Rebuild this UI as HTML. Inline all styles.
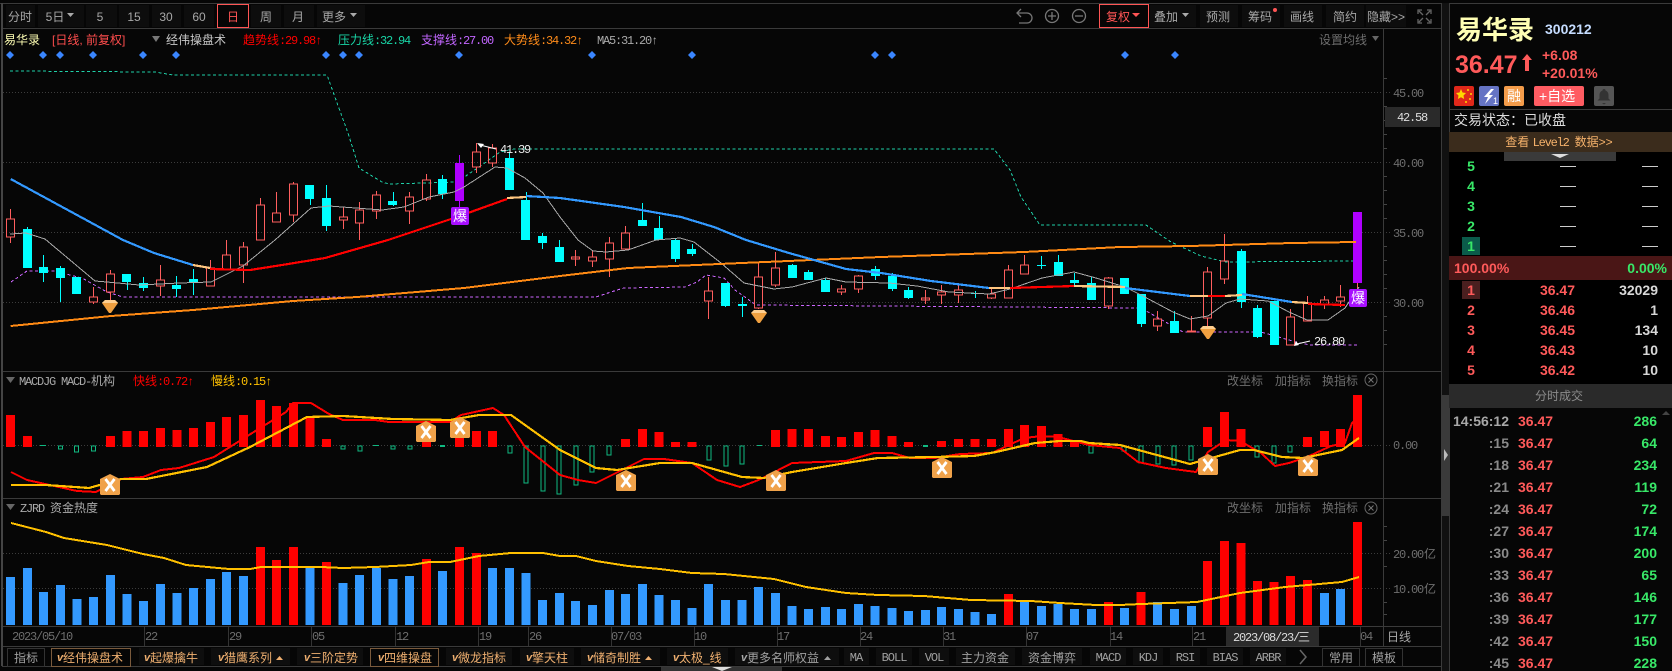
<!DOCTYPE html>
<html lang="zh"><head><meta charset="utf-8"><title>易华录</title>
<style>
html,body{margin:0;padding:0;background:#060606;width:1672px;height:671px;overflow:hidden}
svg{display:block}
text{font-family:"Liberation Sans","Noto Sans CJK SC",sans-serif;font-size:12px;white-space:pre}
.m{font-family:"Liberation Mono","Noto Sans CJK SC",monospace;letter-spacing:-1.2px}
.t{font-size:12px;fill:#a8a8a8;text-anchor:middle}
.g{fill:#6e6e6e;font-size:12px}
.ax{fill:#6e6e6e;font-family:"Liberation Mono",monospace;letter-spacing:-1.2px}
.r{font-size:14px;font-weight:bold;fill:#ff5a5a}
.gr{font-size:14px;font-weight:bold;fill:#38e868;text-anchor:end}
.tm{font-size:14px;font-weight:bold;fill:#8a8a8a;text-anchor:end}
.v{font-size:14px;font-weight:bold;fill:#d8d8d8;text-anchor:end}
.tab{font-size:12px;fill:#f0b070}
.tg{font-size:12px;fill:#a0a0a0;text-anchor:middle}
.tl{font-family:"Liberation Mono",monospace;font-size:12px;fill:#a0a0a0;text-anchor:middle;letter-spacing:-1px}
.pv{font-style:italic;font-size:11px;font-weight:bold}
.c{shape-rendering:crispEdges;fill:none}
.l{fill:none;stroke-linejoin:round;shape-rendering:crispEdges}
</style></head><body>
<svg width="1672" height="671" viewBox="0 0 1672 671" xmlns="http://www.w3.org/2000/svg">
<rect width="1672" height="671" fill="#060606"/>
<g class="c" stroke="#333">
<path d="M0 3.500H1672M2 28.500H1441M2 371.500H1441M2 498.500H1441M2 626.500H1441M2 646.500H1441M2 666.500H1441" stroke="#3a3a3a"/>
<path d="M2 3V666" stroke="#444" stroke-width="2"/>
<path d="M1383.500 29V646M1441.500 3V671" stroke="#3a3a3a"/>
<path d="M144.500 627V646M228.500 627V646M311.500 627V646M395.500 627V646M478.500 627V646M528.500 627V646M611.500 627V646M694.500 627V646M777.500 627V646M860.500 627V646M943.500 627V646M1026.500 627V646M1110.500 627V646M1192.500 627V646M1360.500 627V646" stroke="#333"/>
<path d="M3 92.500H1390M3 162.500H1390M3 232.500H1390M3 302.500H1390M3 445.500H1390M3 553.500H1390M3 588.500H1390" stroke="#3c3c3c" stroke-dasharray="1 2"/>
<path d="M1384 78.500h3M1384 106.500h3M1384 120.500h3M1384 134.500h3M1384 148.500h3M1384 176.500h3M1384 190.500h3M1384 204.500h3M1384 218.500h3M1384 246.500h3M1384 260.500h3M1384 274.500h3M1384 288.500h3M1384 316.500h3M1384 330.500h3M1384 344.500h3M1384 526.500h3M1384 540.500h3M1384 566.500h3M1384 602.500h3M1384 614.500h3" stroke="#444"/>
</g>
<!-- toolbar backgrounds -->
<g fill="#0d0d0d" shape-rendering="crispEdges">
<rect x="6" y="5" width="29" height="22"/><rect x="38" y="5" width="46" height="22"/><rect x="86" y="5" width="31" height="22"/><rect x="119" y="5" width="30" height="22"/><rect x="152" y="5" width="29" height="22"/><rect x="184" y="5" width="30" height="22"/><rect x="251" y="5" width="30" height="22"/><rect x="284" y="5" width="30" height="22"/><rect x="317" y="5" width="48" height="22"/>
<rect x="1150" y="5" width="46" height="22"/><rect x="1200" y="5" width="38" height="22"/><rect x="1242" y="5" width="38" height="22"/><rect x="1284" y="5" width="38" height="22"/><rect x="1326" y="5" width="38" height="22"/><rect x="1366" y="5" width="40" height="22"/>
</g>
<rect x="217.500" y="4.500" width="31" height="23" fill="none" stroke="#f55" shape-rendering="crispEdges"/>
<rect x="1099.500" y="4.500" width="49" height="23" fill="none" stroke="#f55" shape-rendering="crispEdges"/>
<g class="t">
<text class="t" x="20" y="21">分时</text><text class="t" x="55" y="21">5日</text><text class="t" x="100" y="21">5</text><text class="t" x="134" y="21">15</text><text class="t" x="166" y="21">30</text><text class="t" x="199" y="21">60</text>
<text class="t" x="233" y="21" style="fill:#f55">日</text><text class="t" x="266" y="21">周</text><text class="t" x="298" y="21">月</text><text class="t" x="334" y="21">更多</text>
<text class="t" x="1166" y="21">叠加</text><text class="t" x="1218" y="21">预测</text><text class="t" x="1260" y="21">筹码</text><text class="t" x="1302" y="21">画线</text><text class="t" x="1345" y="21">简约</text><text class="t" x="1386" y="21">隐藏&gt;&gt;</text>
<text class="t" x="1118" y="21" style="fill:#f55">复权</text>
</g>
<path d="M67 13h7l-3.500 4zM350 13h7l-3.500 4zM1182 13h7l-3.500 4z" fill="#aaa"/><path d="M1132 13h8l-4 4z" fill="#f55"/>
<circle cx="1275" cy="10" r="2" fill="#f55"/>
<g fill="none" stroke="#777" stroke-width="1.300">
<path d="M1021 9l-4 4 4 4M1017 13h10a5 5 0 0 1 0 10h-8"/>
<circle cx="1052" cy="16" r="6.500"/><path d="M1048 16h8M1052 12v8"/>
<circle cx="1079" cy="16" r="6.500"/><path d="M1075 16h8"/>
<path d="M1418 14v-4h4M1431 14v-4h-4M1418 19v4h4M1431 19v4h-4M1419 11l4 4M1430 11l-4 4M1419 22l4-4M1430 22l-4-4" stroke="#666"/>
</g>
<!-- info row -->
<text x="4" y="44" fill="#ffffb4">易华录</text>
<text x="52" y="44" fill="#ff4d4d">[日线, 前复权]</text>
<path d="M152 36h8l-4 6z" fill="#777"/>
<text x="166" y="44" fill="#c8c8c8">经伟操盘术</text>
<text x="243" y="44" fill="#f00">趋势线<tspan class="m">:29.98↑</tspan></text>
<text x="338" y="44" fill="#19d6a7">压力线<tspan class="m">:32.94</tspan></text>
<text x="421" y="44" fill="#c266ff">支撑线<tspan class="m">:27.00</tspan></text>
<text x="504" y="44" fill="#ff8c1a">大势线<tspan class="m">:34.32↑</tspan></text>
<text x="597" y="44" fill="#aaa" class="m">MA5:31.20↑</text>
<text x="1319" y="44" class="g">设置均线</text><path d="M1372 36h7l-3.500 5z" fill="#666"/>
<!-- blue diamonds -->
<path fill="#3a86ff" d="M10 51l4 4-4 4-4-4zM43 51l4 4-4 4-4-4zM60 51l4 4-4 4-4-4zM93 51l4 4-4 4-4-4zM143 51l4 4-4 4-4-4zM176 51l4 4-4 4-4-4zM326 51l4 4-4 4-4-4zM343 51l4 4-4 4-4-4zM359 51l4 4-4 4-4-4zM459 51l4 4-4 4-4-4zM592 51l4 4-4 4-4-4zM692 51l4 4-4 4-4-4zM875 51l4 4-4 4-4-4zM892 51l4 4-4 4-4-4zM1125 51l4 4-4 4-4-4zM1175 51l4 4-4 4-4-4z"/>
<!-- dashed support/pressure -->
<path class="l" stroke="#1fd0a8" stroke-dasharray="3 2.500" d="M10 71L155 72L173 75L327 75L336 100L348 133L359 168L382 182L389 184L457 182L479 167L500 152L514 149L994 149L1010 170L1021 197L1040 225L1146 225L1171 242L1201 256L1226 262L1354 261"/>
<path class="l" stroke="#cc66ff" stroke-dasharray="3 2.500" d="M11 282L27 271L54 271L82 278L107 292L123 297L596 297L614 291L624 288L685 287L697 282L706 275L724 278L735 290L756 305L1141 308L1183 332L1204 332L1261 332L1296 342L1310 345L1358 345"/>
<!-- candles -->
<path class="c" stroke="#ff5e5e" d="M10.500 209V219M10.500 237V243M6.500 219h8V237h-8zM93.500 287V297M93.500 302V304M89.500 297h8V302h-8zM110.500 270V274M110.500 292V300M106.500 274h8V292h-8zM160.500 265V280M160.500 286V296M156.500 280h8V286h-8zM210.500 260V268M206.500 268h8V286h-8zM226.500 240V255M222.500 255h8V269h-8zM243.500 242V247M243.500 265V283M239.500 247h8V265h-8zM260.500 198V205M256.500 205h8V240h-8zM276.500 192V213M272.500 213h8V222h-8zM293.500 182V184M293.500 215V222M289.500 184h8V215h-8zM343.500 207V217M343.500 220V229M339.500 217h8V220h-8zM359.500 202V210M359.500 223V240M355.500 210h8V223h-8zM376.500 191V195M376.500 211V219M372.500 195h8V211h-8zM409.500 192V197M409.500 211V224M405.500 197h8V211h-8zM426.500 174V180M426.500 199V201M422.500 180h8V199h-8zM476.500 143V152M476.500 167V173M472.500 152h8V167h-8zM492.500 144V148M492.500 163V167M488.500 148h8V163h-8zM575.500 250V266M571.500 257h8V259h-8zM592.500 251V257M592.500 261V267M588.500 257h8V261h-8zM609.500 237V243M609.500 259V277M605.500 243h8V259h-8zM625.500 226V233M621.500 233h8V249h-8zM708.500 277V291M708.500 301V319M704.500 291h8V301h-8zM758.500 263V277M758.500 308V309M754.500 277h8V308h-8zM775.500 252V268M775.500 285V287M771.500 268h8V285h-8zM841.500 285V289M841.500 292V295M837.500 289h8V292h-8zM858.500 275V276M858.500 289V293M854.500 276h8V289h-8zM925.500 290V304M921.500 298h8V300h-8zM941.500 285V292M941.500 295V304M937.500 292h8V295h-8zM958.500 285V290M958.500 295V303M954.500 290h8V295h-8zM991.500 289V294M991.500 298V299M987.500 294h8V298h-8zM1008.500 265V270M1004.500 270h8V298h-8zM1024.500 255V265M1020.500 265h8V274h-8zM1108.500 277V278M1108.500 306V309M1104.500 278h8V306h-8zM1157.500 311V319M1157.500 326V331M1153.500 319h8V326h-8zM1191.500 316V331M1187.500 331h8V332h-8zM1207.500 267V272M1207.500 318V328M1203.500 272h8V318h-8zM1224.500 234V261M1224.500 279V284M1220.500 261h8V279h-8zM1290.500 309V317M1286.500 317h8V345h-8zM1307.500 296V303M1303.500 303h8V321h-8zM1324.500 296V300M1324.500 304V309M1320.500 300h8V304h-8zM1340.500 285V297M1340.500 301V307M1336.500 297h8V301h-8z"/>
<path class="c" stroke="#0ff" d="M27.500 227V268M43.500 255V282M60.500 266V302M127.500 274V290M143.500 277V291M176.500 276V297M193.500 269V295M310.500 185V205M326.500 185V231M393.500 192V206M442.500 175V199M509.500 152V190M526.500 192V240M542.500 233V249M559.500 240V262M642.500 203V226M659.500 216V240M675.500 238V262M692.500 244V256M725.500 283V307M742.500 297V317M792.500 264V278M808.500 270V280M825.500 278V292M875.500 266V280M892.500 273V291M908.500 287V299M975.500 291V298M1041.500 256V269M1058.500 255V276M1074.500 273V286M1091.500 277V300M1141.500 294V327M1174.500 311V333M1241.500 249V308M1257.500 305V338M1274.500 301V345"/>
<path shape-rendering="crispEdges" fill="#0ff" d="M23 229h9V268h-9zM39 267h9V273h-9zM56 268h9V278h-9zM72 277h9V294h-9zM122 274h9V282h-9zM139 283h9V288h-9zM172 285h9V289h-9zM189 279h9V282h-9zM305 185h9V199h-9zM322 198h9V226h-9zM388 201h9V205h-9zM438 179h9V194h-9zM505 158h9V190h-9zM521 200h9V240h-9zM538 236h9V243h-9zM555 247h9V262h-9zM638 220h9V226h-9zM654 228h9V240h-9zM671 240h9V259h-9zM687 249h9V254h-9zM721 283h9V306h-9zM738 304h9V306h-9zM788 265h9V278h-9zM804 272h9V280h-9zM821 280h9V292h-9zM871 269h9V276h-9zM888 276h9V289h-9zM904 290h9V298h-9zM971 293h9V294h-9zM1037 265h9V266h-9zM1054 262h9V276h-9zM1070 280h9V283h-9zM1087 283h9V300h-9zM1120 278h9V294h-9zM1137 294h9V324h-9zM1170 321h9V333h-9zM1237 251h9V302h-9zM1253 308h9V337h-9zM1270 301h9V345h-9z"/>
<path class="c" stroke="#b000ff" d="M459.500 155V207"/><path class="c" stroke="#ff5e5e" d="M1357.500 283V290"/>
<path shape-rendering="crispEdges" fill="#b000ff" d="M455 163h9V201h-9zM1353 212h9V283h-9z"/>
<!-- MA lines -->
<path class="l" stroke="#a8a8a8" d="M10 234L26 233L45 239L95 281L107 282L139 285L179 283L211 282L243 266L275 240L311 208L329 206L382 210L404 207L429 197L454 192L464 187L495 167L507 168L525 178L543 193L560 217L578 240L593 251L606 252L628 250L656 240L680 238L694 242L721 263L744 283L774 289L792 287L826 278L846 282L889 283L917 286L949 292L989 294L1010 289L1042 278L1074 272L1096 278L1125 287L1141 295L1173 312L1190 319L1208 316L1226 303L1240 299L1268 301L1289 312L1307 320L1328 320L1345 308L1359 287"/>
<path class="l" stroke="#ff8a14" stroke-width="2" d="M10.700 326L111 316L193 310L293 301L357 297L464 288L560 276L628 268L742 263L881 257L1024 252L1120 247L1190 246L1292 243L1356 242"/>
<g class="l" stroke-width="2.200">
<path stroke="#3399ff" d="M10.700 179L123 240L154 253L193 265M526 196L560 198L624 207L681 217L714 227L746 240L789 253L846 269L881 273L931 281L989 288M1125 288L1190 296M1242 294L1292 302"/>
<path stroke="#ffc680" d="M193 265L210 268M507 198L526 197M989 288L1010 288M1074 286L1125 287M1190 296L1208 296M1225 296L1242 295M1292 302L1308 303"/>
<path stroke="#f00" d="M210 269L250 270L282 265L325 258L388 240L454 218L507 199M1010 288L1074 286M1208 296L1225 296M1308 304L1345 305"/>
</g>
<!-- annotations -->
<path d="M477 143l7 1-3 4z" fill="#fff"/><path d="M480 145L496 149" stroke="#fff" fill="none"/>
<text x="500" y="153" class="m" fill="#eee">41.39</text>
<path d="M1294 346l2-5 3 4z" fill="#fff"/><path d="M1297 344L1310 341" stroke="#fff" fill="none"/>
<text x="1314" y="345" class="m" fill="#eee">26.80</text>
<!-- gems -->
<g><path d="M105 300h10l3 3-7 10h-2l-7-10z" fill="#f0a040"/><path d="M105 300h10l3 3h-16z" fill="#ffcf90"/></g>
<g><path d="M754 310h10l3 3-7 10h-2l-7-10z" fill="#f0a040"/><path d="M754 310h10l3 3h-16z" fill="#ffcf90"/></g>
<g><path d="M1203 326h10l3 3-7 10h-2l-7-10z" fill="#f0a040"/><path d="M1203 326h10l3 3h-16z" fill="#ffcf90"/></g>
<!-- 爆 -->
<rect x="451" y="207" width="18" height="18" rx="2" fill="#a80fff"/><text x="453" y="221" style="font-size:14px" fill="#fff">爆</text>
<rect x="1349" y="289" width="18" height="18" rx="2" fill="#a80fff"/><text x="1351" y="303" style="font-size:14px" fill="#fff">爆</text>
<!-- MACD -->
<text x="19" y="385" class="m" fill="#aaa">MACDJG MACD-</text><text x="91" y="385" fill="#aaa">机构</text>
<path d="M6 377h9l-4.500 6z" fill="#666"/>
<text x="133" y="385" fill="#f00">快线<tspan class="m">:0.72↑</tspan></text>
<text x="211" y="385" fill="#ffc000">慢线<tspan class="m">:0.15↑</tspan></text>
<text x="1227" y="385" class="g">改坐标</text><text x="1275" y="385" class="g">加指标</text><text x="1322" y="385" class="g">换指标</text>
<circle cx="1371" cy="380" r="6" fill="none" stroke="#666"/><path d="M1368.500 377.500l5 5M1373.500 377.500l-5 5" stroke="#777" fill="none"/>
<path shape-rendering="crispEdges" fill="none" stroke="#f00" stroke-width="9" d="M10.500 415V447M27.500 436V447M110.500 436V447M127 431V447M143.500 431V447M160.500 428V447M177 430V447M193.500 428V447M210.500 422V447M226.500 417V447M243.500 415V447M260.500 400V447M276.500 406V447M293.500 403V447M310 417V447M326.500 439V447M426.500 442V447M459.500 437V447M476.500 431V447M492.500 431V447M625.500 439V447M642.500 429V447M659 432V447M675.500 442V447M692 442V447M775.500 430V447M792 429V447M808.500 429V447M825.500 436V447M841.500 437V447M858.500 432V447M875 430V447M892 436V447M908.500 442V447M941.500 441V447M958.500 439V447M975 439V447M991.500 439V447M1008.500 429V447M1024.500 425V447M1041.500 426V447M1058 434V447M1074.500 441V447M1207.500 427V447M1224.500 412V447M1241 429V447M1307.500 437V447M1324.500 431V447M1340.500 429V447M1357.500 395V447"/>
<path class="c" stroke="#10b981" d="M58.500 446h4v3h-4zM74.500 446h4v6h-4zM91.500 446h4v5h-4zM341 446h4v3h-4zM358 446h4v5h-4zM391 446h4v3h-4zM408 446h4v3h-4zM508 446h4v7h-4zM524 446h4v37h-4zM541 446h4v45h-4zM557 446h4v48h-4zM574 446h4v39h-4zM590 446h4v26h-4zM607 446h4v9h-4zM707 446h4v14h-4zM724 446h4v20h-4zM740 446h4v18h-4zM1089 446h4v7h-4zM1122 446h4v5h-4zM1139 446h4v17h-4zM1156 446h4v18h-4zM1172 446h4v19h-4zM1189 446h4v14h-4zM1255 446h4v11h-4zM1272 446h4v17h-4zM1288 446h4v6h-4zM40 445.500h6M373 445.500h6M757 445.500h5M1105 445.500h5"/>
<path shape-rendering="crispEdges" fill="#10b981" d="M440 445h5v2h-5zM923 445h5v2h-5z"/>
<path class="l" stroke="#f00" stroke-width="2" d="M11 472L27 480L77 491L96 492L121 479L143 477L161 470L179 468L214 457L257 430L286 412L293 403L311 403L329 414L343 420L375 420L389 422L450 422L461 415L493 408L504 415L525 447L560 475L578 480L596 483L622 470L644 459L664 459L692 463L717 480L740 487L756 481L765 477L792 463L846 461L874 453L892 453L910 458L935 458L960 454L992 453L1024 438L1042 436L1058 437L1089 445L1120 448L1138 462L1166 468L1196 472L1208 452L1226 440L1240 441L1261 453L1275 466L1289 463L1307 457L1331 446L1345 443L1352 423L1359 417"/>
<path class="l" stroke="#ffc000" stroke-width="2.200" d="M11 485L46 485L89 488L121 479L146 479L207 467L250 447L307 417L343 416L393 419L450 420L479 415L511 415L560 450L596 468L617 470L660 463L692 463L742 477L764 478L792 472L846 463L878 458L935 457L974 456L996 452L1035 443L1060 441L1081 441L1089 443L1120 445L1190 464L1215 457L1240 450L1254 450L1282 457L1303 458L1342 450L1359 438"/>
<!-- X icons -->
<g transform="translate(100,474)"><path d="M0 5L10 0L20 5V20L19 21H1L0 20z" fill="#f0a24a"/><path d="M5.500 5L14.500 17M14.500 5L5.500 17" stroke="#fff" stroke-width="2.800" fill="none"/></g>
<g transform="translate(416,421)"><path d="M0 5L10 0L20 5V20L19 21H1L0 20z" fill="#f0a24a"/><path d="M5.500 5L14.500 17M14.500 5L5.500 17" stroke="#fff" stroke-width="2.800" fill="none"/></g>
<g transform="translate(450,417)"><path d="M0 5L10 0L20 5V20L19 21H1L0 20z" fill="#f0a24a"/><path d="M5.500 5L14.500 17M14.500 5L5.500 17" stroke="#fff" stroke-width="2.800" fill="none"/></g>
<g transform="translate(616,470)"><path d="M0 5L10 0L20 5V20L19 21H1L0 20z" fill="#f0a24a"/><path d="M5.500 5L14.500 17M14.500 5L5.500 17" stroke="#fff" stroke-width="2.800" fill="none"/></g>
<g transform="translate(766,470)"><path d="M0 5L10 0L20 5V20L19 21H1L0 20z" fill="#f0a24a"/><path d="M5.500 5L14.500 17M14.500 5L5.500 17" stroke="#fff" stroke-width="2.800" fill="none"/></g>
<g transform="translate(932,457)"><path d="M0 5L10 0L20 5V20L19 21H1L0 20z" fill="#f0a24a"/><path d="M5.500 5L14.500 17M14.500 5L5.500 17" stroke="#fff" stroke-width="2.800" fill="none"/></g>
<g transform="translate(1198,454)"><path d="M0 5L10 0L20 5V20L19 21H1L0 20z" fill="#f0a24a"/><path d="M5.500 5L14.500 17M14.500 5L5.500 17" stroke="#fff" stroke-width="2.800" fill="none"/></g>
<g transform="translate(1298,455)"><path d="M0 5L10 0L20 5V20L19 21H1L0 20z" fill="#f0a24a"/><path d="M5.500 5L14.500 17M14.500 5L5.500 17" stroke="#fff" stroke-width="2.800" fill="none"/></g>
<!-- ZJRD -->
<path d="M6 504h9l-4.500 6z" fill="#666"/>
<text x="20" y="512" class="m" fill="#aaa">ZJRD</text><text x="50" y="512" fill="#aaa">资金热度</text>
<text x="1227" y="512" class="g">改坐标</text><text x="1275" y="512" class="g">加指标</text><text x="1322" y="512" class="g">换指标</text>
<circle cx="1371" cy="508" r="6" fill="none" stroke="#666"/><path d="M1368.500 505.500l5 5M1373.500 505.500l-5 5" stroke="#777" fill="none"/>
<path shape-rendering="crispEdges" fill="none" stroke="#3399ff" stroke-width="9" d="M10.500 577V625M27.500 568V625M43.500 592V625M60.500 585V625M77 599V625M93.500 597V625M110.500 575V625M127 594V625M143.500 601V625M160.500 584V625M177 593V625M193.500 588V625M210.500 579V625M226.500 572V625M243.500 576V625M310 567V625M343 583V625M359.500 575V625M376.500 568V625M393 579V625M409.500 576V625M442.500 571V625M492.500 568V625M509.500 568V625M526 573V625M542.500 600V625M559.500 593V625M575.500 601V625M592.500 605V625M609.500 590V625M625.500 594V625M642.500 584V625M659 595V625M675.500 600V625M692 608V625M708.500 584V625M725.500 600V625M742 600V625M758.500 587V625M775.500 593V625M792 606V625M808.500 609V625M825.500 607V625M841.500 609V625M858.500 604V625M875 606V625M892 608V625M908.500 611V625M925.500 610V625M941.500 607V625M958.500 609V625M975 612V625M991.500 614V625M1024.500 602V625M1041.500 606V625M1058 604V625M1074.500 609V625M1091.500 609V625M1124.500 608V625M1157.500 602V625M1174.500 609V625M1191.500 606V625M1324.500 593V625M1340.500 589V625"/>
<path shape-rendering="crispEdges" fill="none" stroke="#f00" stroke-width="9" d="M260.500 547V625M276.500 560V625M293.500 547V625M326.500 562V625M426.500 559V625M459.500 547V625M476.500 553V625M1008.500 594V625M1108.500 602V625M1141 592V625M1207.500 561V625M1224.500 541V625M1241 543V625M1257.500 581V625M1274 582V625M1290.500 576V625M1307.500 580V625M1357.500 522V625"/>
<path class="l" stroke="#ffc000" stroke-width="2" d="M11 523L46 532L64 538L107 545L143 554L164 558L186 565L229 569L250 569L261 567L321 567L343 568L375 567L411 565L429 562L450 562L479 556L511 553L543 553L560 556L576 556L596 561L628 566L660 569L692 573L724 574L774 579L806 587L846 593L878 595L924 596L971 600L1031 601L1060 603L1096 605L1120 605L1141 604L1197 602L1240 593L1285 587L1342 582L1359 577"/>
<!-- axis labels -->
<text x="1393" y="97" class="ax">45.00</text><text x="1393" y="167" class="ax">40.00</text><text x="1393" y="237" class="ax">35.00</text><text x="1393" y="307" class="ax">30.00</text><text x="1393" y="449" class="ax">0.00</text>
<text x="1393" y="558" class="ax">20.00</text><text x="1424" y="558" class="g">亿</text><text x="1393" y="593" class="ax">10.00</text><text x="1424" y="593" class="g">亿</text>
<rect x="1385" y="107" width="55" height="20" fill="#2a2a2a"/><text x="1412" y="121" class="m" text-anchor="middle" fill="#ddd">42.58</text>
<g class="ax">
<text x="12" y="640" class="ax">2023/05/10</text><text x="145" y="640" class="ax">22</text><text x="229" y="640" class="ax">29</text><text x="312" y="640" class="ax">05</text><text x="396" y="640" class="ax">12</text><text x="479" y="640" class="ax">19</text><text x="529" y="640" class="ax">26</text><text x="611" y="640" class="ax">07/03</text><text x="694" y="640" class="ax">10</text><text x="777" y="640" class="ax">17</text><text x="860" y="640" class="ax">24</text><text x="943" y="640" class="ax">31</text><text x="1026" y="640" class="ax">07</text><text x="1110" y="640" class="ax">14</text><text x="1193" y="640" class="ax">21</text><text x="1360" y="640" class="ax">04</text>
</g>
<rect x="1226" y="627" width="93" height="19" fill="#2b2b2b"/><text x="1233" y="641" class="m" fill="#ddd">2023/08/23/</text><text x="1298" y="641" fill="#ddd">三</text>
<text x="1387" y="641" fill="#a8a8a8">日线</text>
<!-- tabs -->
<g fill="#0e0e0e" shape-rendering="crispEdges">
<rect x="139" y="648" width="65" height="17"/><rect x="211" y="648" width="79" height="17"/><rect x="297" y="648" width="66" height="17"/><rect x="446" y="648" width="66" height="17"/><rect x="520" y="648" width="54" height="17"/><rect x="581" y="648" width="79" height="17"/><rect x="667" y="648" width="61" height="17"/><rect x="735" y="648" width="104" height="17"/><rect x="844" y="648" width="25" height="17"/><rect x="876" y="648" width="36" height="17"/><rect x="919" y="648" width="30" height="17"/><rect x="956" y="648" width="59" height="17"/><rect x="1022" y="648" width="60" height="17"/><rect x="1090" y="648" width="36" height="17"/><rect x="1133" y="648" width="30" height="17"/><rect x="1170" y="648" width="30" height="17"/><rect x="1207" y="648" width="36" height="17"/><rect x="1250" y="648" width="36" height="17"/>
</g>
<g fill="none" shape-rendering="crispEdges">
<rect x="7.500" y="648.500" width="37" height="18" stroke="#333"/><rect x="51.500" y="648.500" width="79" height="18" stroke="#7a5a3c"/><rect x="370.500" y="648.500" width="68" height="18" stroke="#7a5a3c"/><rect x="1322.500" y="648.500" width="37" height="18" stroke="#333"/><rect x="1365.500" y="648.500" width="37" height="18" stroke="#333"/>
</g>
<text x="26" y="662" class="tg">指标</text>
<text x="57" y="661" class="tab pv">v</text><text x="63" y="662" class="tab">经伟操盘术</text>
<text x="144" y="661" class="tab pv">v</text><text x="150" y="662" class="tab">起爆擒牛</text>
<text x="218" y="661" class="tab pv">v</text><text x="224" y="662" class="tab">猎鹰系列</text><path d="M276 660h7l-3.500-4z" fill="#f0b070"/>
<text x="304" y="661" class="tab pv">v</text><text x="310" y="662" class="tab">三阶定势</text>
<text x="378" y="661" class="tab pv">v</text><text x="384" y="662" class="tab">四维操盘</text>
<text x="452" y="661" class="tab pv">v</text><text x="458" y="662" class="tab">微龙指标</text>
<text x="526" y="661" class="tab pv">v</text><text x="532" y="662" class="tab">擎天柱</text>
<text x="587" y="661" class="tab pv">v</text><text x="593" y="662" class="tab">储奇制胜</text><path d="M645 660h7l-3.500-4z" fill="#f0b070"/>
<text x="673" y="661" class="tab pv">v</text><text x="679" y="662" class="tab">太极_线</text>
<text x="741" y="661" class="pv" fill="#aaa" style="font-size:11px">v</text><text x="747" y="662" fill="#a0a0a0">更多名师权益</text><path d="M824 660h7l-3.500-4z" fill="#a0a0a0"/>
<text x="856" y="661" class="tl">MA</text><text x="894" y="661" class="tl">BOLL</text><text x="934" y="661" class="tl">VOL</text><text x="985" y="662" class="tg">主力资金</text><text x="1052" y="662" class="tg">资金博弈</text><text x="1108" y="661" class="tl">MACD</text><text x="1148" y="661" class="tl">KDJ</text><text x="1185" y="661" class="tl">RSI</text><text x="1225" y="661" class="tl">BIAS</text><text x="1268" y="661" class="tl">ARBR</text>
<path d="M1300 650l6 7-6 7" stroke="#666" stroke-width="1.500" fill="none"/>
<text x="1341" y="662" class="tg">常用</text><text x="1384" y="662" class="tg">模板</text>
<rect x="661" y="667" width="121" height="4" fill="#333"/><path d="M712 667h20l-10 4z" fill="#ddd"/>
<!-- scroll strip -->
<rect x="1442" y="3" width="7" height="668" fill="#111"/>
<rect x="1442" y="395" width="7" height="121" fill="#3a3a3a"/><path d="M1444 449l4 6-4 6z" fill="#bbb"/>
<!-- right panel -->
<rect x="1449" y="4" width="223" height="667" fill="#060606"/>
<path class="c" stroke="#3a3a3a" d="M1449.500 3V671M1449 109.500H1672"/>
<text x="1456" y="39" style="font-size:26px;font-weight:bold" fill="#ffffb4">易华录</text>
<text x="1545" y="34" style="font-size:14px;font-weight:bold" fill="#c5dcff">300212</text>
<text x="1455" y="73" style="font-size:25px;font-weight:bold" fill="#ff5a5a">36.47</text>
<path d="M1527 54l5 6h-3v11h-4V60h-3z" fill="#ff5a5a"/>
<text x="1542" y="60" style="font-size:14px;font-weight:bold" fill="#ff5a5a">+6.08</text>
<text x="1542" y="78" style="font-size:14px;font-weight:bold" fill="#ff5a5a">+20.01%</text>
<rect x="1454" y="86" width="20" height="20" rx="2" fill="#e0281a"/>
<path d="M1461 89l1.500 3.500 3.500.5-2.500 2.500.6 3.500-3.100-1.800-3.100 1.800.6-3.500-2.500-2.500 3.500-.5z" fill="#ffd700"/><circle cx="1468" cy="90" r="1" fill="#ffd700"/><circle cx="1471" cy="94" r="1" fill="#ffd700"/><circle cx="1470" cy="99" r="1" fill="#ffd700"/><circle cx="1466" cy="102" r="1" fill="#ffd700"/>
<rect x="1479" y="86" width="20" height="20" rx="2" fill="#6674c4"/><path d="M1491 89l-7 8h4l-3 7 8-9h-4l5-6z" fill="#fff"/><text x="1493" y="104" style="font-size:9px" fill="#fff">1</text>
<rect x="1504" y="86" width="20" height="20" rx="2" fill="#f49c4a"/><text x="1507" y="101" style="font-size:14px" fill="#fff">融</text>
<rect x="1534" y="86" width="50" height="20" rx="2" fill="#ff5c62"/><text x="1539" y="101" style="font-size:14px" fill="#fff">+自选</text>
<rect x="1594" y="86" width="20" height="20" rx="2" fill="#555"/><path d="M1604 89a1.500 1.500 0 0 1 1.500 1.500c2.500 1 3 3 3 5v3l2 2H1597.500l2-2v-3c0-2 .5-4 3-5A1.500 1.500 0 0 1 1604 89zM1602 103h4l-2 1.500z" fill="#333"/>
<text x="1454" y="125" style="font-size:14px" fill="#dcdcdc">交易状态：已收盘</text>
<rect x="1449" y="132" width="223" height="20" fill="#3b2c1c"/>
<text x="1559" y="146" text-anchor="middle" fill="#f6b26b"><tspan>查看 </tspan><tspan class="m">Level2 </tspan><tspan>数据&gt;&gt;</tspan></text>
<rect x="1449" y="152" width="223" height="233" fill="#000"/>
<rect x="1504" y="152" width="112" height="9" fill="#3a3a3a"/><path d="M1551 154h18l-9 4z" fill="#ddd"/>
<rect x="1462" y="237" width="18" height="18" fill="#0b5b4a"/>
<g style="text-anchor:middle">
<text x="1471" y="171" class="gr" style="text-anchor:middle">5</text><text x="1471" y="191" class="gr" style="text-anchor:middle">4</text><text x="1471" y="211" class="gr" style="text-anchor:middle">3</text><text x="1471" y="231" class="gr" style="text-anchor:middle">2</text><text x="1471" y="251" class="gr" style="text-anchor:middle">1</text>
</g>
<path class="c" stroke="#ccc" d="M1560 166.500h16M1642 166.500h16M1560 186.500h16M1642 186.500h16M1560 206.500h16M1642 206.500h16M1560 226.500h16M1642 226.500h16M1560 246.500h16M1642 246.500h16"/>
<rect x="1449" y="256" width="223" height="24" fill="#4a1616"/>
<text x="1454" y="273" class="r">100.00%</text><text x="1667" y="273" class="gr">0.00%</text>
<rect x="1462" y="281" width="18" height="18" fill="#4a1f1f"/>
<text x="1471" y="295" class="r" text-anchor="middle">1</text><text x="1575" y="295" class="r" text-anchor="end">36.47</text><text x="1658" y="295" class="v">32029</text>
<text x="1471" y="315" class="r" text-anchor="middle">2</text><text x="1575" y="315" class="r" text-anchor="end">36.46</text><text x="1658" y="315" class="v">1</text>
<text x="1471" y="335" class="r" text-anchor="middle">3</text><text x="1575" y="335" class="r" text-anchor="end">36.45</text><text x="1658" y="335" class="v">134</text>
<text x="1471" y="355" class="r" text-anchor="middle">4</text><text x="1575" y="355" class="r" text-anchor="end">36.43</text><text x="1658" y="355" class="v">10</text>
<text x="1471" y="375" class="r" text-anchor="middle">5</text><text x="1575" y="375" class="r" text-anchor="end">36.42</text><text x="1658" y="375" class="v">10</text>
<rect x="1449" y="384" width="223" height="24" fill="#2a2a2a"/>
<text x="1559" y="400" text-anchor="middle" fill="#8c8c8c">分时成交</text>
<path d="M1662 415l4-4 4 4z" fill="#444"/>
<text x="1509" y="426" class="tm" style="fill:#a8a8a8">14:56:12</text><text x="1518" y="426" class="r">36.47</text><text x="1657" y="426" class="gr">286</text>
<text x="1509" y="448" class="tm">:15</text><text x="1518" y="448" class="r">36.47</text><text x="1657" y="448" class="gr">64</text>
<text x="1509" y="470" class="tm">:18</text><text x="1518" y="470" class="r">36.47</text><text x="1657" y="470" class="gr">234</text>
<text x="1509" y="492" class="tm">:21</text><text x="1518" y="492" class="r">36.47</text><text x="1657" y="492" class="gr">119</text>
<text x="1509" y="514" class="tm">:24</text><text x="1518" y="514" class="r">36.47</text><text x="1657" y="514" class="gr">72</text>
<text x="1509" y="536" class="tm">:27</text><text x="1518" y="536" class="r">36.47</text><text x="1657" y="536" class="gr">174</text>
<text x="1509" y="558" class="tm">:30</text><text x="1518" y="558" class="r">36.47</text><text x="1657" y="558" class="gr">200</text>
<text x="1509" y="580" class="tm">:33</text><text x="1518" y="580" class="r">36.47</text><text x="1657" y="580" class="gr">65</text>
<text x="1509" y="602" class="tm">:36</text><text x="1518" y="602" class="r">36.47</text><text x="1657" y="602" class="gr">146</text>
<text x="1509" y="624" class="tm">:39</text><text x="1518" y="624" class="r">36.47</text><text x="1657" y="624" class="gr">177</text>
<text x="1509" y="646" class="tm">:42</text><text x="1518" y="646" class="r">36.47</text><text x="1657" y="646" class="gr">150</text>
<text x="1509" y="668" class="tm">:45</text><text x="1518" y="668" class="r">36.47</text><text x="1657" y="668" class="gr">228</text>
</svg>
</body></html>
